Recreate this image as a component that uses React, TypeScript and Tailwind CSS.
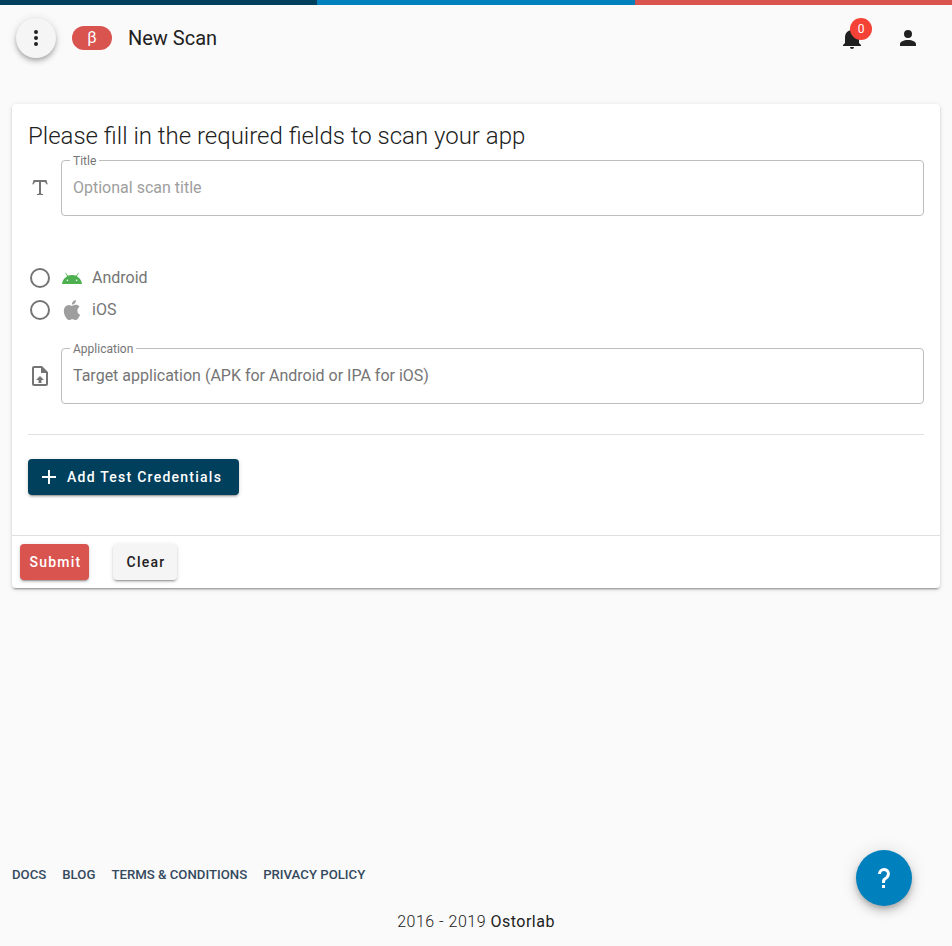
import type { ReactNode } from "react";

const icons = {
  dots: "M12,16A2,2 0 0,1 14,18A2,2 0 0,1 12,20A2,2 0 0,1 10,18A2,2 0 0,1 12,16M12,10A2,2 0 0,1 14,12A2,2 0 0,1 12,14A2,2 0 0,1 10,12A2,2 0 0,1 12,10M12,4A2,2 0 0,1 14,6A2,2 0 0,1 12,8A2,2 0 0,1 10,6A2,2 0 0,1 12,4Z",
  bell: "M21,19V20H3V19L5,17V11C5,7.9 7.03,5.17 10,4.29C10,4.19 10,4.1 10,4A2,2 0 0,1 12,2A2,2 0 0,1 14,4C14,4.1 14,4.19 14,4.29C16.97,5.17 19,7.9 19,11V17L21,19M14,21A2,2 0 0,1 12,23A2,2 0 0,1 10,21",
  account:
    "M12,4A4,4 0 0,1 16,8A4,4 0 0,1 12,12A4,4 0 0,1 8,8A4,4 0 0,1 12,4M12,14C16.42,14 20,15.79 20,18V20H4V18C4,15.79 7.58,14 12,14Z",
  text: "M18.5,4L19.66,8.35L18.7,8.61C18.25,7.74 17.79,6.87 17.26,6.43C16.73,6 16.11,6 15.5,6H13V16.5C13,17 13,17.5 13.33,17.75C13.67,18 14.33,18 15,18V19H9V18C9.67,18 10.33,18 10.67,17.75C11,17.5 11,17 11,16.5V6H8.5C7.89,6 7.27,6 6.74,6.43C6.21,6.87 5.75,7.74 5.3,8.61L4.34,8.35L5.5,4H18.5Z",
  upload:
    "M14,2L20,8V20A2,2 0 0,1 18,22H6A2,2 0 0,1 4,20V4A2,2 0 0,1 6,2H14M18,20V9H13V4H6V20H18M12,12L16,16H13.5V19H10.5V16H8L12,12Z",
  radio:
    "M12,20A8,8 0 0,1 4,12A8,8 0 0,1 12,4A8,8 0 0,1 20,12A8,8 0 0,1 12,20M12,2A10,10 0 0,0 2,12A10,10 0 0,0 12,22A10,10 0 0,0 22,12A10,10 0 0,0 12,2Z",
  android:
    "M16.61 15.15C16.15 15.15 15.77 14.78 15.77 14.32S16.15 13.5 16.61 13.5H16.61C17.07 13.5 17.45 13.86 17.45 14.32C17.45 14.78 17.07 15.15 16.61 15.15M7.41 15.15C6.95 15.15 6.57 14.78 6.57 14.32C6.57 13.86 6.95 13.5 7.41 13.5H7.41C7.87 13.5 8.24 13.86 8.24 14.32C8.24 14.78 7.87 15.15 7.41 15.15M16.91 10.14L18.58 7.26C18.67 7.09 18.61 6.88 18.45 6.79C18.28 6.69 18.07 6.75 18 6.92L16.29 9.83C14.95 9.22 13.5 8.9 12 8.91C10.47 8.91 9 9.24 7.73 9.82L6.04 6.91C5.95 6.74 5.74 6.68 5.57 6.78C5.4 6.87 5.35 7.08 5.44 7.25L7.1 10.13C4.25 11.69 2.29 14.58 2 18H22C21.72 14.59 19.77 11.7 16.91 10.14Z",
  apple:
    "M18.71,19.5C17.88,20.74 17,21.95 15.66,21.97C14.32,22 13.89,21.18 12.37,21.18C10.84,21.18 10.37,21.95 9.1,22C7.79,22.05 6.8,20.68 5.96,19.47C4.25,17 2.94,12.45 4.7,9.39C5.57,7.87 7.13,6.91 8.82,6.88C10.1,6.86 11.32,7.75 12.11,7.75C12.89,7.75 14.37,6.68 15.92,6.84C16.57,6.87 18.39,7.1 19.56,8.82C19.47,8.88 17.39,10.1 17.41,12.63C17.44,15.65 20.06,16.66 20.09,16.67C20.06,16.74 19.67,18.11 18.71,19.5M13,3.5C13.73,2.67 14.94,2.04 15.94,2C16.07,3.17 15.6,4.35 14.9,5.19C14.21,6.04 13.07,6.7 11.95,6.61C11.8,5.46 12.36,4.26 13,3.5Z",
  plus: "M19,13H13V19H11V13H5V11H11V5H13V11H19V13Z",
  help: "M10,19H13V22H10V19M12,2C17.35,2.22 19.68,7.62 16.5,11.67C15.67,12.67 14.33,13.33 13.67,14.17C13,15 13,16 13,17H10C10,15.33 10,13.92 10.67,12.92C11.33,11.92 12.67,11.33 13.5,10.67C15.92,8.43 15.32,5.26 12,5A3,3 0 0,0 9,8H6A6,6 0 0,1 12,2Z",
};

function Icon({ name, className = "" }: { name: keyof typeof icons; className?: string }) {
  return (
    <svg viewBox="0 0 24 24" fill="currentColor" className={`size-6 shrink-0 ${className}`}>
      <path d={icons[name]} />
    </svg>
  );
}

function Field({ icon, label, children }: { icon: "text" | "upload"; label: string; children: ReactNode }) {
  return (
    <div className="flex items-center gap-[9px]">
      <Icon name={icon} className="text-[#757575]" />
      <div className="relative flex h-14 flex-1 items-center rounded border border-[#bdbdbd] px-[11px] pb-px">
        <span className="absolute -top-2.5 left-2 bg-white px-[3px] text-xs leading-5 text-[#757575]">{label}</span>
        {children}
      </div>
    </div>
  );
}

function Platform({ icon, color, label }: { icon: "android" | "apple"; color: string; label: string }) {
  return (
    <label className="flex h-6 items-center text-[#757575]">
      <Icon name="radio" />
      <Icon name={icon} className={`ml-2 ${color}`} />
      <span className="ml-2">{label}</span>
    </label>
  );
}

const raised = "shadow-[0_3px_1px_-2px_rgba(0,0,0,0.2),0_2px_2px_0_rgba(0,0,0,0.14),0_1px_5px_0_rgba(0,0,0,0.12)]";

export default function App() {
  return (
    <div className="relative flex h-[946px] flex-col bg-[#fafafa] font-[Roboto,sans-serif] text-base text-[#212121]">
      <div className="flex h-[5px] shrink-0">
        <div className="w-[317px] bg-[#00405d]" />
        <div className="w-[318px] bg-[#0081bd]" />
        <div className="flex-1 bg-[#d9534f]" />
      </div>

      <header className="flex h-[66px] shrink-0 items-center px-4">
        <button className="flex size-10 items-center justify-center rounded-full bg-[#f5f5f5] shadow-[0_2px_4px_-1px_rgba(0,0,0,0.2),0_4px_5px_0_rgba(0,0,0,0.14),0_1px_10px_0_rgba(0,0,0,0.12)]">
          <Icon name="dots" />
        </button>
        <span className="ml-4 flex h-6 w-10 items-center justify-center rounded-full bg-[#d9534f] text-base text-white">
          β
        </span>
        <h1 className="ml-4 text-xl leading-[30px]">New Scan</h1>
        <div className="relative mr-8 ml-auto">
          <Icon name="bell" />
          <span className="absolute -top-2 left-2.5 flex size-[22px] items-center justify-center rounded-full bg-[#f44336] text-xs text-white">
            0
          </span>
        </div>
        <Icon name="account" className="mr-4" />
      </header>

      <main className={`mx-3 mt-[33px] flex h-[484px] shrink-0 flex-col rounded bg-white ${raised}`}>
        <section className="flex-1 px-4 pt-4">
          <h2 className="h-10 text-2xl leading-8 font-light">Please fill in the required fields to scan your app</h2>
          <Field icon="text" label="Title">
            <input
              className="w-full bg-transparent outline-none placeholder:text-[#9e9e9e]"
              placeholder="Optional scan title"
            />
          </Field>
          <div className="mt-[50px] flex flex-col gap-2">
            <Platform icon="android" color="text-[#4caf50]" label="Android" />
            <Platform icon="apple" color="text-[#9e9e9e]" label="iOS" />
          </div>
          <div className="mt-[26px]">
            <Field icon="upload" label="Application">
              <span className="text-[#757575]">Target application (APK for Android or IPA for iOS)</span>
            </Field>
          </div>
          <hr className="mt-[30px] border-[#e0e0e0]" />
          <button
            className={`mt-6 flex h-9 w-[211px] items-center rounded bg-[#00405d] pl-[9px] text-sm font-medium tracking-[1.25px] whitespace-nowrap text-white ${raised}`}
          >
            <Icon name="plus" className="mr-1.5" />
            Add Test Credentials
          </button>
        </section>
        <footer className="flex h-[53px] items-center gap-6 border-t border-[#e0e0e0] px-2 text-sm font-medium tracking-[1.25px]">
          <button className={`h-9 w-[69px] rounded bg-[#d9534f] pl-0.5 text-white ${raised}`}>Submit</button>
          <button className={`h-9 w-16 rounded bg-[#f5f5f5] pl-0.5 ${raised}`}>Clear</button>
        </footer>
      </main>

      <nav className="mt-auto mb-[25px] flex gap-4 px-3 text-[13.2px] leading-5 font-medium text-[#34495e]">
        <a>DOCS</a>
        <a>BLOG</a>
        <a>TERMS &amp; CONDITIONS</a>
        <a>PRIVACY POLICY</a>
      </nav>
      <p className="mb-3 text-center leading-6 font-light tracking-[0.5px]">
        2016 - 2019 <span className="font-normal">Ostorlab</span>
      </p>

      <button className="absolute top-[850px] right-10 flex size-14 items-center justify-center rounded-full bg-[#0081bd] text-white shadow-[0_3px_5px_-1px_rgba(0,0,0,0.2),0_6px_10px_0_rgba(0,0,0,0.14),0_1px_18px_0_rgba(0,0,0,0.12)]">
        <Icon name="help" />
      </button>
    </div>
  );
}
